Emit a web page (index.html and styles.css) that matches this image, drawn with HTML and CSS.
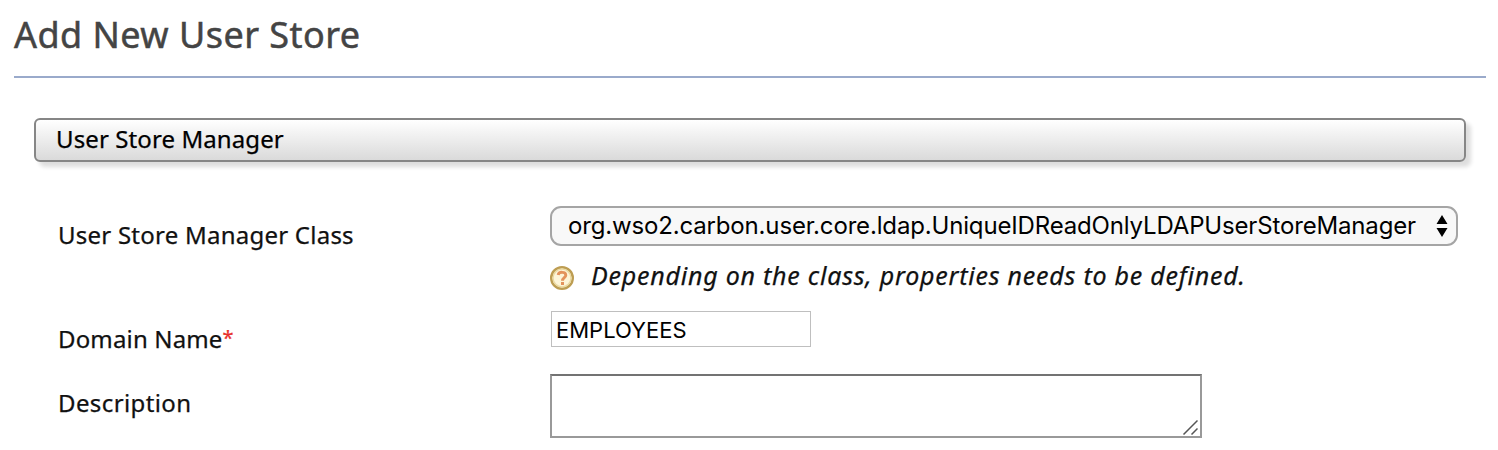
FILE: index.html
```html
<!DOCTYPE html>
<html lang="en">
<head>
<meta charset="utf-8">
<title>Add New User Store</title>
<link rel="stylesheet" href="styles.css">
</head>
<body>
<main class="page">
  <h1 class="page-title"><span class="title-text">Add New User Store</span></h1>
  <section class="panel">
    <h2 class="panel-heading"><span class="heading-text">User Store Manager</span></h2>
    <form class="form">
      <div class="row row-class">
        <label class="label"><span class="class-text">User Store Manager Class</span></label>
        <div class="field">
          <div class="select" role="combobox">
            <span class="select-text">org.wso2.carbon.user.core.ldap.UniqueIDReadOnlyLDAPUserStoreManager</span>
            <svg class="arrows" width="12" height="22" viewBox="0 0 12 22"><path d="M6 0L11.500 9H.5zM6 22L11.500 13H.5z"/></svg>
          </div>
          <div class="hint">
            <svg class="help" width="24" height="24" viewBox="0 0 24 24">
              <circle cx="12" cy="12" r="10.8" fill="#fdf5d8" stroke="#bd9d52" stroke-width="2.4"/>
              <circle cx="12" cy="12" r="9" fill="none" stroke="#ead9a2" stroke-width="1.4"/>
              <path d="M8.200 9C8.600 5.400 15.800 5.400 15.800 9.200C15.800 11.700 12.500 11.700 12.500 14.800" fill="none" stroke="#e3935c" stroke-width="2.900"/>
              <rect x="11" y="16" width="3" height="3" fill="#e3935c"/>
            </svg>
            <em class="hint-text">Depending on the class, properties needs to be defined.</em>
          </div>
        </div>
      </div>
      <div class="row row-domain">
        <label class="label"><span class="domain-text">Domain Name</span><span class="required">*</span></label>
        <div class="input"><span class="input-text">EMPLOYEES</span></div>
      </div>
      <div class="row row-description">
        <label class="label"><span class="description-text">Description</span></label>
        <div class="textarea">
          <svg class="grip" width="16" height="16" viewBox="0 0 16 16"><path d="M1.500 15.500L15.500 1.500M9.500 15.500L15.500 9.500"/></svg>
        </div>
      </div>
    </form>
  </section>
</main>
</body>
</html>
```
FILE: styles.css
```css
* { box-sizing: border-box; }
body {
  margin: 0;
  height: 450px;
  overflow: hidden;
  background: #fff;
  color: #111;
  font: 24px/32px "Noto Sans", "Open Sans", sans-serif;
  -webkit-text-stroke: 0.25px currentColor;
}
.page { padding: 0 12px 0 14px; }
.page-title {
  margin: 0;
  height: 78px;
  padding-top: 11px;
  border-bottom: 2px solid #9aaacb;
  color: #444;
  font-size: 36px;
  font-weight: 400;
  letter-spacing: 0.46px;
  line-height: 48px;
  -webkit-text-stroke-width: 0.5px;
}
.panel { padding: 40px 20px 0; }
.panel-heading {
  margin: 0;
  height: 44px;
  padding: 3px 20px;
  border: 2px solid #868686;
  border-radius: 6px;
  background: linear-gradient(#fff, #dadada);
  box-shadow: 5px 5px 4px #dedede;
  color: #000;
  font-size: 24px;
  font-weight: 400;
  letter-spacing: 0.1px;
  line-height: 32px;
}
.form { padding: 44px 0 0 24px; }
.row { display: grid; grid-template-columns: 492px 1fr; align-items: start; }
.row-class { height: 105px; }
.row-domain { height: 63px; }
.row-class .label { padding-top: 13px; letter-spacing: 0.24px; }
.row-domain .label { padding-top: 12px; letter-spacing: 0.15px; }
.row-description .label { padding-top: 13px; letter-spacing: 0.39px; }
.label { white-space: nowrap; }
.required { color: #e8302a; font-size: 20px; line-height: 20px; vertical-align: 3px; }
.select {
  display: flex;
  justify-content: space-between;
  align-items: center;
  width: 908px;
  height: 40px;
  padding: 0 8px 0 16px;
  border: 2px solid #a5a5a5;
  border-radius: 11px;
  background: #f8f8f8;
  color: #000;
  font-family: Inter, Roboto, sans-serif;
  letter-spacing: -0.16px;
  white-space: nowrap;
  -webkit-text-stroke-width: 0;
}
.arrows { flex: none; }
.hint { display: flex; padding-top: 13px; gap: 17px; }
.help { margin-top: 7px; }
.hint-text { font-size: 25px; letter-spacing: 0.77px; white-space: nowrap; }
.input {
  width: 260px;
  height: 36px;
  margin-left: 1px;
  padding: 1px 4px;
  border: 1px solid #bfbfbf;
  color: #000;
  font: 22px/34px Inter, Roboto, sans-serif;
  -webkit-text-stroke-width: 0;
}
.textarea {
  display: flex;
  justify-content: flex-end;
  align-items: flex-end;
  width: 652px;
  height: 64px;
  padding: 0 2px 1px 0;
  border: 2px solid #999;
  border-top-color: #737373;
}
.grip { fill: none; stroke: #555; stroke-width: 1.5; }
```
